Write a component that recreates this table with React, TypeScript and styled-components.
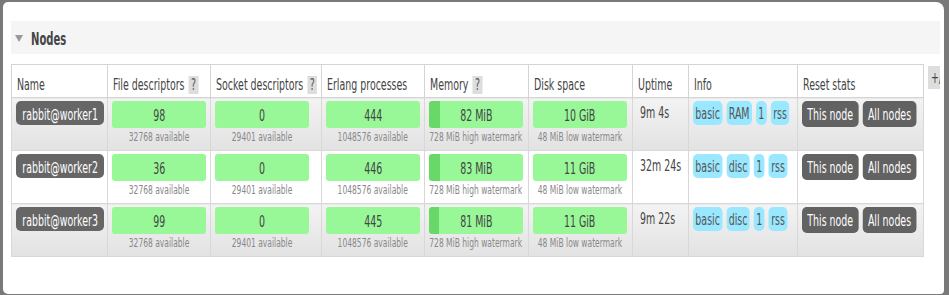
import React from 'react';
import styled, { createGlobalStyle } from 'styled-components';

const SX = 0.59;

const Global = createGlobalStyle`
  html, body { margin: 0; padding: 0; height: 100%; }
  body {
    background: #797979;
    font-family: "DejaVu Sans", Verdana, sans-serif;
    color: #444;
  }
  #root { height: 100%; }
  * { box-sizing: border-box; }
`;

const Page = styled.div`
  height: 100vh;
  padding: 2px 5px 1px 3px;
  display: flex;
`;

const Panel = styled.main`
  flex: 1;
  background: #fff;
  border-radius: 5px 8px 4px 5px;
  padding: 19px 4px 0 8px;
  overflow: hidden;
`;

const Section = styled.section`
  overflow: hidden;
`;

const SectionHeader = styled.h2`
  margin: 0;
  height: 33px;
  background: #f5f5f5;
  display: flex;
  align-items: center;
  gap: 8px;
  padding: 2px 0 0 4px;
  font-size: 17px;
  font-weight: bold;
  color: #444;
`;

const Squeeze = styled.span<{ $origin?: 'left' | 'center'; $sx?: number }>`
  display: inline-block;
  white-space: nowrap;
  transform: scaleX(${(p) => p.$sx ?? SX});
  transform-origin: ${(p) => p.$origin ?? 'left'} center;
`;

const TableArea = styled.div`
  display: flex;
  align-items: flex-start;
  gap: 4px;
  margin-top: 10px;
`;

const Table = styled.table`
  flex: none;
  width: 912px;
  table-layout: fixed;
  border-collapse: collapse;
  font-size: 16px;
`;

const Th = styled.th`
  border: 1px solid #d4d4d4;
  background: #fff;
  text-align: left;
  font-weight: normal;
  color: #444;
  padding: 10px 5px 2px;
  line-height: 20px;
`;

const Help = styled.span`
  display: inline-block;
  margin-left: 7px;
  padding: 0 4px;
  line-height: 18px;
  background: #ddd;
  color: #555;
`;

const Td = styled.td<{ $alt: boolean }>`
  border: 1px solid #d8d8d8;
  vertical-align: top;
  padding: 3px 4px 5px;
  background: ${(p) => (p.$alt ? 'linear-gradient(#f3f3f3, #e2e2e2)' : '#fff')};
`;

const NodeName = styled.div`
  width: 88px;
  height: 24px;
  padding-top: 2px;
  background: #666;
  color: #fff;
  border-radius: 5px;
  display: flex;
  align-items: center;
  justify-content: center;
`;

const Stack = styled.div`
  width: 94px;
`;

const Meter = styled.div<{ $fill?: number }>`
  height: 27px;
  padding-top: 1px;
  border-radius: 3px;
  background: ${(p) =>
    p.$fill !== undefined
      ? `linear-gradient(90deg, #68d868 ${p.$fill}%, #98f898 ${p.$fill}%)`
      : '#98f898'};
  color: #444;
  display: flex;
  align-items: center;
  justify-content: center;
`;

const SubNote = styled.div`
  margin-top: 2px;
  font-size: 12px;
  line-height: 15px;
  color: #888;
  display: flex;
  justify-content: center;
`;

const Uptime = styled.div`
  padding: 0 0 0 3px;
  line-height: 24px;
  color: #444;
`;

const Group = styled.div`
  display: inline-flex;
  white-space: nowrap;
  transform: scaleX(${SX});
  transform-origin: left center;
`;

const InfoGroup = styled(Group)`
  gap: 7px;
`;

const Badge = styled.span`
  height: 24px;
  padding: 2px 4px 0;
  line-height: 22px;
  background: #99e8ff;
  border-radius: 8px / 5px;
  color: #555;
`;

const ResetGroup = styled(Group)`
  gap: 7px;
`;

const ResetButton = styled.span`
  height: 26px;
  padding: 2px 9px 0;
  line-height: 24px;
  background: #626262;
  color: #fff;
  border-radius: 8px / 5px;
`;

const ColumnToggle = styled.div`
  flex: none;
  margin-top: 2px;
  height: 23px;
  padding: 1px 3px 0;
  line-height: 22px;
  font-size: 16px;
  background: #ddd;
  color: #444;
`;

const Triangle = () => (
  <svg width="8" height="7" viewBox="0 0 8 7" aria-hidden>
    <polygon points="0,0 8,0 4,7" fill="#999" />
  </svg>
);

type NodeRow = {
  name: string;
  fd: number;
  sd: number;
  proc: number;
  mem: number;
  disk: string;
  uptime: string;
  info: string[];
};

const nodes: NodeRow[] = [
  { name: 'rabbit@worker1', fd: 98, sd: 0, proc: 444, mem: 82, disk: '10 GiB', uptime: '9m 4s', info: ['basic', 'RAM', '1', 'rss'] },
  { name: 'rabbit@worker2', fd: 36, sd: 0, proc: 446, mem: 83, disk: '11 GiB', uptime: '32m 24s', info: ['basic', 'disc', '1', 'rss'] },
  { name: 'rabbit@worker3', fd: 99, sd: 0, proc: 445, mem: 81, disk: '11 GiB', uptime: '9m 22s', info: ['basic', 'disc', '1', 'rss'] },
];

const colWidths = [96, 103, 111, 103, 104, 104, 56, 109, 126];

const headers: { label: string; help?: boolean }[] = [
  { label: 'Name' },
  { label: 'File descriptors', help: true },
  { label: 'Socket descriptors', help: true },
  { label: 'Erlang processes' },
  { label: 'Memory', help: true },
  { label: 'Disk space' },
  { label: 'Uptime' },
  { label: 'Info' },
  { label: 'Reset stats' },
];

const Stat = ({ value, note, fill }: { value: string; note: string; fill?: number }) => (
  <Stack>
    <Meter $fill={fill}>
      <Squeeze $origin="center">{value}</Squeeze>
    </Meter>
    <SubNote>
      <Squeeze $origin="center" $sx={0.63}>
        {note}
      </Squeeze>
    </SubNote>
  </Stack>
);

export default function App() {
  return (
    <>
      <Global />
      <Page>
        <Panel>
          <Section>
            <SectionHeader>
              <Triangle />
              <Squeeze>Nodes</Squeeze>
            </SectionHeader>
            <TableArea>
              <Table>
                <colgroup>
                  {colWidths.map((w, i) => (
                    <col key={i} style={{ width: w }} />
                  ))}
                </colgroup>
                <thead>
                  <tr>
                    {headers.map((h) => (
                      <Th key={h.label}>
                        <Squeeze>
                          {h.label}
                          {h.help && <Help>?</Help>}
                        </Squeeze>
                      </Th>
                    ))}
                  </tr>
                </thead>
                <tbody>
                  {nodes.map((n, i) => {
                    const alt = i % 2 === 0;
                    return (
                      <tr key={n.name}>
                        <Td $alt={alt}>
                          <NodeName>
                            <Squeeze $origin="center">{n.name}</Squeeze>
                          </NodeName>
                        </Td>
                        <Td $alt={alt}>
                          <Stat value={String(n.fd)} note="32768 available" />
                        </Td>
                        <Td $alt={alt}>
                          <Stat value={String(n.sd)} note="29401 available" />
                        </Td>
                        <Td $alt={alt}>
                          <Stat value={String(n.proc)} note="1048576 available" />
                        </Td>
                        <Td $alt={alt}>
                          <Stat value={`${n.mem} MiB`} note="728 MiB high watermark" fill={(n.mem / 728) * 100} />
                        </Td>
                        <Td $alt={alt}>
                          <Stat value={n.disk} note="48 MiB low watermark" />
                        </Td>
                        <Td $alt={alt}>
                          <Uptime>
                            <Squeeze>{n.uptime}</Squeeze>
                          </Uptime>
                        </Td>
                        <Td $alt={alt}>
                          <InfoGroup>
                            {n.info.map((b, j) => (
                              <Badge key={j}>{b}</Badge>
                            ))}
                          </InfoGroup>
                        </Td>
                        <Td $alt={alt}>
                          <ResetGroup>
                            <ResetButton>This node</ResetButton>
                            <ResetButton>All nodes</ResetButton>
                          </ResetGroup>
                        </Td>
                      </tr>
                    );
                  })}
                </tbody>
              </Table>
              <ColumnToggle>
                <Squeeze>+/-</Squeeze>
              </ColumnToggle>
            </TableArea>
          </Section>
        </Panel>
      </Page>
    </>
  );
}
